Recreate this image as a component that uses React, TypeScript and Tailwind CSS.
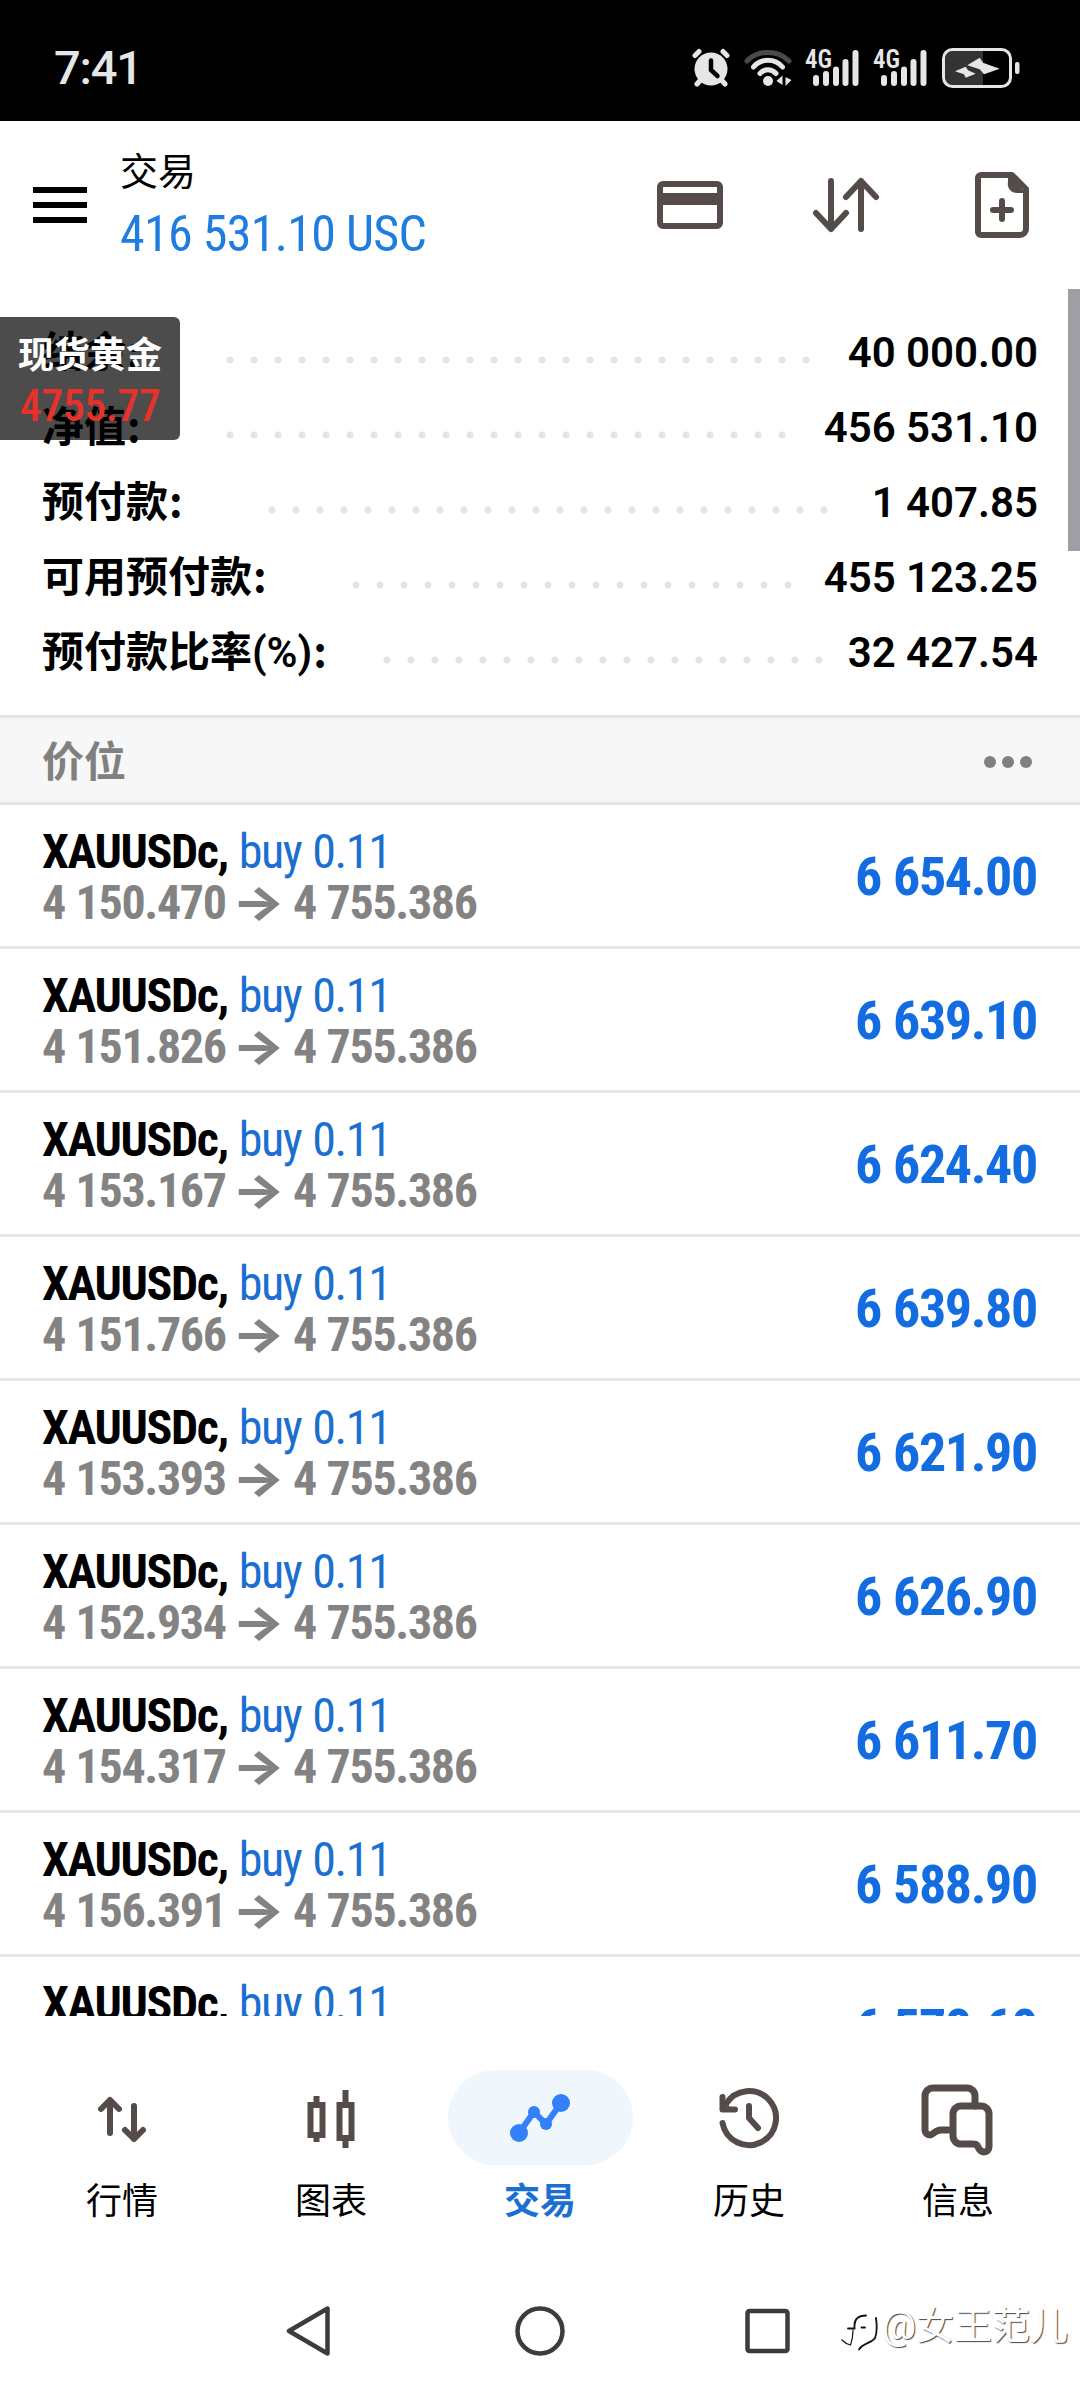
import type { ReactNode } from "react";

const summary = [
  { label: "结余", width: "w-[184px]", value: "40 000.00", dots: 25 },
  { label: "净值", width: "w-[184px]", value: "456 531.10", dots: 24 },
  { label: "预付款", width: "w-[226px]", value: "1 407.85", dots: 24 },
  { label: "可用预付款", width: "w-[310px]", value: "455 123.25", dots: 19 },
  { label: "预付款比率(%)", width: "w-[341px]", value: "32 427.54", dots: 19 },
];

const positions = [
  { open: "4 150.470", profit: "6 654.00" },
  { open: "4 151.826", profit: "6 639.10" },
  { open: "4 153.167", profit: "6 624.40" },
  { open: "4 151.766", profit: "6 639.80" },
  { open: "4 153.393", profit: "6 621.90" },
  { open: "4 152.934", profit: "6 626.90" },
  { open: "4 154.317", profit: "6 611.70" },
  { open: "4 156.391", profit: "6 588.90" },
  { open: "4 157.325", profit: "6 578.60" },
];

function Signal() {
  return (
    <svg className="w-[54px] h-[40px] shrink-0 overflow-visible" viewBox="0 0 54 40" fill="#e6e6e6">
      <text x="0" y="20" fontSize="25" fontWeight="600" textLength="27" lengthAdjust="spacingAndGlyphs" className="font-['Roboto'] [font-stretch:75%]">
        4G
      </text>
      <rect x="8" y="27" width="6" height="11" rx="3" />
      <rect x="18" y="23" width="6" height="15" rx="3" />
      <rect x="28" y="18.5" width="6" height="19.5" rx="3" />
      <rect x="37.5" y="11" width="6" height="27" rx="3" />
      <rect x="47.5" y="2" width="6" height="36" rx="3" />
    </svg>
  );
}

function StatusBar() {
  return (
    <div className="flex h-[121px] items-center bg-black pl-[54px] pr-[60px] pt-[14px]">
      <span className="text-[47px] leading-none font-medium tracking-[-1.2px] text-[#e6e6e6] [font-stretch:92%]">7:41</span>
      <div className="ml-auto flex items-center">
        <svg className="h-[40px] w-[40px]" viewBox="0 0 40 40" fill="none" stroke="#e6e6e6" strokeWidth="5" strokeLinecap="round">
          <circle cx="20" cy="21" r="16.5" fill="#e6e6e6" stroke="none" />
          <path d="M4 7.5l4-4M36 7.5l-4-4M9.500 32l-3.500 4M30.500 32l3.500 4" />
          <path d="M20 12.500v9.500l6.500 6" stroke="#000" strokeWidth="4.500" />
        </svg>
        <svg className="ml-[13px] h-[40px] w-[48px]" viewBox="0 0 48 40" fill="none" stroke="#e6e6e6" strokeWidth="5" strokeLinecap="round">
          <path d="M3 13C14 1.500 34 1.500 45 13" stroke="#4a4a4a" />
          <path d="M9.500 19C17 10 31 10 38.500 19" />
          <path d="M16 25.500C20.500 20.500 27.500 20.500 32 25.500" />
          <circle cx="24" cy="33" r="5" fill="#e6e6e6" stroke="none" />
          <path d="M32.500 33l6-5.500v9.500zM47.500 32l-6-3v9z" fill="#e6e6e6" stroke="none" />
        </svg>
        <div className="ml-[13px] flex gap-[14px]">
          <Signal />
          <Signal />
        </div>
        <svg className="ml-[15px] h-[42px] w-[78px]" viewBox="0 0 78 42" fill="none">
          <rect x="3" y="4" width="38" height="34" rx="8" fill="#333" />
          <path d="M34 4h7v34h-7z" fill="#333" />
          <rect x="1.500" y="2.500" width="67" height="37" rx="9" stroke="#e6e6e6" strokeWidth="3" />
          <path d="M13 24.300l10.700-4.600 2.300 3.600 7.700 3.400-10 4-1.700-3.400zM25.300 18.300l12.400-7.600 3.300 5 16.700 6L42 27.300l-4.300-5z" fill="#e6e6e6" />
          <rect x="73" y="15" width="4.500" height="12" rx="2" fill="#e6e6e6" />
        </svg>
      </div>
    </div>
  );
}

function Header() {
  return (
    <header className="flex h-[168px] shrink-0">
      <div className="ml-[33px] mt-[66px] flex h-[36px] w-[54px] flex-col justify-between">
        <div className="h-[6px] bg-black" />
        <div className="h-[6px] bg-black" />
        <div className="h-[6px] bg-black" />
      </div>
      <div className="ml-[33px] pt-[23px]">
        <p className="text-[38px] leading-[56px] text-black">交易</p>
        <p className="whitespace-nowrap text-[50px] leading-[68px] tracking-[-0.7px] text-[#1f7ce0] [font-stretch:75%]">416 531.10 USC</p>
      </div>
      <div className="ml-auto mr-[42px] mt-[48px] flex h-[72px]">
        <svg className="h-[72px] w-[72px]" viewBox="0 0 72 72" fill="none" stroke="#554c49" strokeWidth="6">
          <rect x="6" y="15" width="60" height="42" rx="3" />
          <path d="M4 30h64" strokeWidth="12" />
        </svg>
        <svg className="ml-[84px] h-[72px] w-[72px]" viewBox="0 0 72 72" fill="none" stroke="#554c49" strokeWidth="6" strokeLinecap="round" strokeLinejoin="round">
          <path d="M21 12v48M6 44l15 16 15-16M51 60V12M36 28l15-16 15 16" />
        </svg>
        <svg className="ml-[84px] h-[72px] w-[72px]" viewBox="0 0 72 72" fill="none" stroke="#554c49" strokeWidth="6" strokeLinecap="round" strokeLinejoin="round">
          <path d="M15 6h31l14 14v40a6 6 0 0 1-6 6H15a3 3 0 0 1-3-3V9a3 3 0 0 1 3-3z" />
          <path d="M42 7v6a9 9 0 0 0 9 11h8L46 7z" fill="#554c49" stroke="none" />
          <path d="M36 32v18M27 41h18" />
        </svg>
      </div>
    </header>
  );
}

function Summary() {
  return (
    <section className="h-[426px] px-[42px] pt-[26px]">
      {summary.map(({ label, width, value, dots }) => (
        <div key={label} className="flex h-[75px] items-start text-[42px] leading-[75px] font-semibold text-black">
          <div className={width}>
            <span className="whitespace-nowrap">
              {label}
              <span className="pl-[1px] font-['Noto_Sans_CJK_SC'] leading-none">:</span>
            </span>
          </div>
          <div
            className="mt-[41px] h-2 bg-[radial-gradient(circle_at_4px_4px,#e4e4e4_3px,transparent_4px)] bg-[length:24px_8px] bg-repeat-x"
            style={{ width: dots * 24 }}
          />
          <span className="ml-auto">{value}</span>
        </div>
      ))}
    </section>
  );
}

function Positions() {
  return (
    <section className="h-[1301px] shrink-0 overflow-hidden">
      <div className="flex h-[90px] items-center justify-between border-y-[3px] border-[#e5e5e5] bg-[#f7f7f7] pl-[42px] pr-[48px] pt-[3px]">
        <span className="pt-[3px] text-[42px] leading-none font-semibold text-[#808080]">价位</span>
        <div className="flex gap-[6px]">
          <div className="size-3 rounded-full bg-[#808080]" />
          <div className="size-3 rounded-full bg-[#808080]" />
          <div className="size-3 rounded-full bg-[#808080]" />
        </div>
      </div>
      {positions.map(({ open, profit }) => (
        <div key={open} className="flex h-[144px] items-center justify-between border-b-[3px] border-[#e5e5e5] px-[42px] [font-stretch:75%]">
          <div className="pt-[2px] text-[48px] leading-[51px] tracking-[-1.35px] [word-spacing:1px] whitespace-nowrap">
            <p>
              <span className="font-bold text-black">XAUUSDc, </span>
              <span className="text-[#1b6fd3]">buy 0.11</span>
            </p>
            <p className="flex font-bold text-[#838383]">
              <span className="w-[182px]">{open}</span>
              <span className="w-[69px] scale-x-[1.22] text-center font-['Inter'] text-[46px] font-extrabold tracking-normal">→</span>
              <span>4 755.386</span>
            </p>
          </div>
          <span className="pr-[1px] pt-[2px] text-[54px] leading-none font-bold tracking-[-1.35px] [word-spacing:1px] text-[#136de0]">{profit}</span>
        </div>
      ))}
    </section>
  );
}

function Tab({ label, active, children }: { label: string; active?: boolean; children: ReactNode }) {
  return (
    <div className="flex w-[209px] flex-col items-center">
      <div className={active ? "flex h-[95px] w-[185px] items-center justify-center rounded-full bg-[#eff7fd]" : "flex h-[95px] w-[185px] items-center justify-center"}>
        {children}
      </div>
      <span className={active ? "mt-[9px] text-[36px] leading-[56px] font-bold text-[#1b6fd3]" : "mt-[9px] text-[36px] leading-[56px] text-black"}>{label}</span>
    </div>
  );
}

function TabBar() {
  return (
    <nav className="flex h-[244px] shrink-0 justify-center pt-[54px]">
      <Tab label="行情">
        <svg className="size-[72px]" viewBox="0 0 72 72" fill="none" stroke="#554c49" strokeWidth="6" strokeLinecap="round" strokeLinejoin="round">
          <path d="M24 51V18M15 27l9-9 9 9M48 24v33M39 48l9 9 9-9" />
        </svg>
      </Tab>
      <Tab label="图表">
        <svg className="size-[72px]" viewBox="0 0 72 72" fill="none" stroke="#554c49" strokeWidth="6">
          <path d="M15.500 23h12v30h-12zM21.500 14v8M21.500 53v7M44.500 23h12v33h-12zM50.500 8v14M50.500 56v10" />
        </svg>
      </Tab>
      <Tab label="交易" active>
        <svg className="size-[72px]" viewBox="0 0 72 72" fill="#347ffa">
          <path d="M15 51l15-21 12 12 15-21" fill="none" stroke="#347ffa" strokeWidth="6" />
          <circle cx="15" cy="51" r="9" />
          <circle cx="30" cy="30" r="6" />
          <circle cx="42" cy="42" r="6" />
          <circle cx="57" cy="21" r="9" />
        </svg>
      </Tab>
      <Tab label="历史">
        <svg className="size-[72px]" viewBox="0 0 72 72" fill="none" stroke="#554c49" strokeWidth="6" strokeLinecap="round" strokeLinejoin="round">
          <path d="M9.500 41A27 27 0 1 0 13 22l-3 4" />
          <path d="M9.500 15v12.500H22" />
          <path d="M9.500 16v11.500H19z" fill="#554c49" stroke="none" />
          <path d="M36 24v12l9 10" />
        </svg>
      </Tab>
      <Tab label="信息">
        <svg className="mr-[4px] size-[78px]" viewBox="0 0 78 78" fill="none" stroke="#554c49" strokeWidth="7" strokeLinecap="round" strokeLinejoin="round">
          <path d="M32 51h-8c-6 0-8 5-11 5s-5-2-5-5V17a8 8 0 0 1 8-8h34a8 8 0 0 1 8 8v10" />
          <path d="M44 27h20a8 8 0 0 1 8 8v33c0 3-2 5-5 5-4 0-5-3-6-5-1-3-3-3-6-3H44a8 8 0 0 1-8-8V35a8 8 0 0 1 8-8z" />
        </svg>
      </Tab>
    </nav>
  );
}

function SystemNav() {
  return (
    <div className="flex h-[128px] items-center gap-[178px] pl-[284px] pt-[14px]">
      <svg className="size-[50px]" viewBox="0 0 50 50" fill="none" stroke="#3c3c3c" strokeWidth="4.500" strokeLinejoin="round">
        <path d="M5 25L43.500 2.500v45z" />
      </svg>
      <svg className="h-[50px] w-[56px] -mr-[6px]" viewBox="0 0 56 50" fill="none" stroke="#3c3c3c" strokeWidth="4.500">
        <circle cx="28" cy="25" r="22.500" />
      </svg>
      <svg className="size-[50px]" viewBox="0 0 50 50" fill="none" stroke="#3c3c3c" strokeWidth="4.500">
        <rect x="7.500" y="5" width="40" height="40" rx="2" />
      </svg>
    </div>
  );
}

export default function App() {
  return (
    <div className="relative flex h-[2388px] w-[1080px] flex-col overflow-hidden bg-white font-['Roboto','Noto_Sans_CJK_SC',sans-serif]">
      <StatusBar />
      <Header />
      <Summary />
      <Positions />
      <TabBar />
      <SystemNav />

      {/* scroll thumb */}
      <div className="absolute right-0 top-[289px] h-[262px] w-[12px] bg-[#a09ea5]" />

      {/* floating quote */}
      <div className="absolute left-0 top-[317px] flex h-[123px] w-[180px] flex-col items-center rounded-r-[6px] bg-black/70">
        <span className="mt-[13px] text-[36px] leading-[52px] font-bold text-white">现货黄金</span>
        <span className="-mt-[1px] text-[44px] leading-[50px] font-medium tracking-[-0.5px] text-[#e8312a] [font-stretch:78%]">4755.77</span>
      </div>

      {/* watermark */}
      <div className="absolute left-[840px] top-[2298px] flex items-center gap-[2px]">
        <svg className="mt-[12px] size-[40px]" viewBox="0 0 40 40" fill="none" stroke="#111" strokeLinecap="round">
          <path d="M8 16.500h6.500V13c0-6 4-9.500 11.500-9.500" strokeWidth="1.800" />
          <path d="M13 18c0 6-1 11-2.500 15-3-.5-6-2.500-8.500-5" strokeWidth="1.200" />
          <path d="M36 6c1 7 1 15-1 20-3 5-12 5-16 11.500" strokeWidth="1.800" />
          <path d="M21.500 15.500H25" strokeWidth="1.800" />
        </svg>
        <span className="whitespace-nowrap text-[38px] leading-[56px] text-white [text-shadow:1px_1px_1px_#444]">@女王范儿</span>
      </div>
    </div>
  );
}
